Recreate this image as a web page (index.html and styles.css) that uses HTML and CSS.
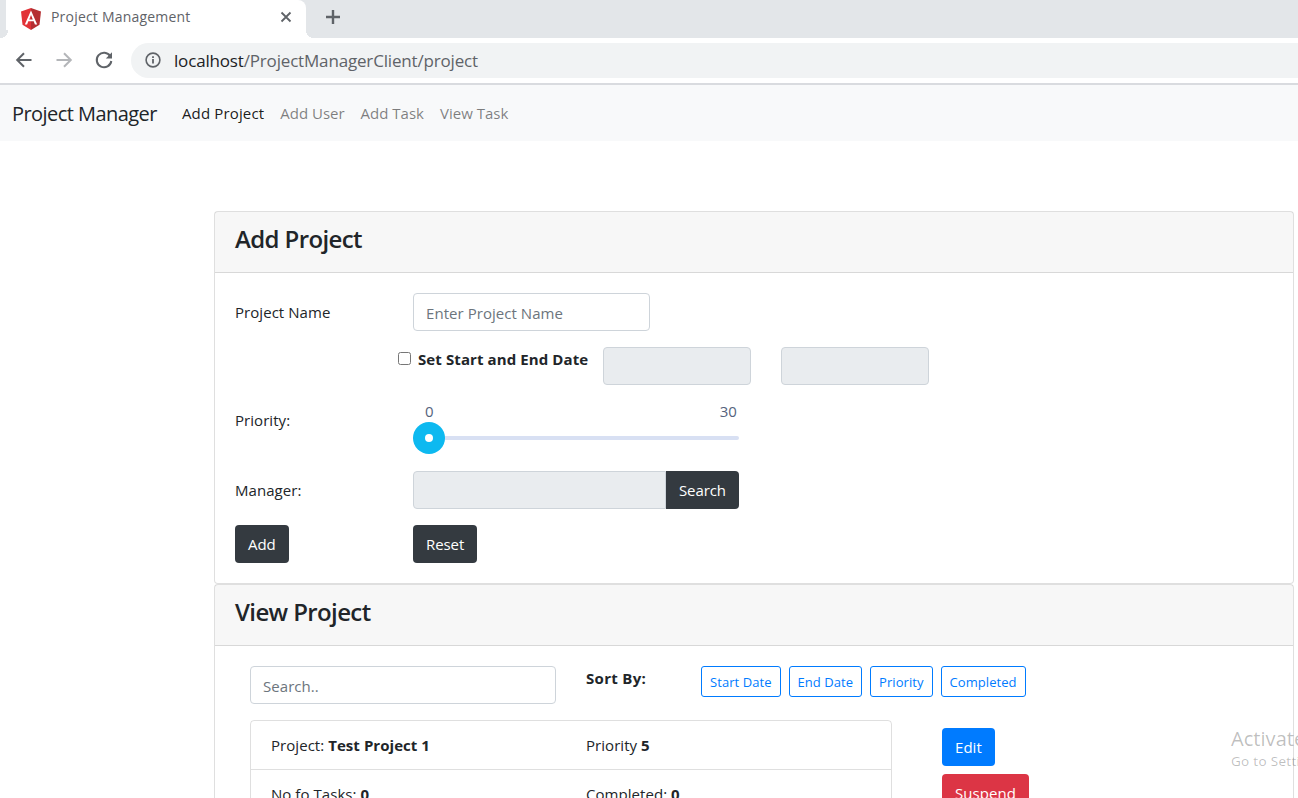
FILE: index.html
```html
<!DOCTYPE html>
<html lang="en">
<head>
  <meta charset="UTF-8">
  <title>Project Management</title>
  <link rel="stylesheet" href="styles.css">
</head>
<body>
  <!-- Browser chrome -->
  <div class="tabstrip">
    <div class="tab">
      <svg class="favicon" width="20" height="22" viewBox="0 0 20 22">
        <path fill="#e23237" d="M10 0 0 3.6l1.5 13.2L10 22z"/>
        <path fill="#b52e31" d="m10 0 10 3.6-1.5 13.2L10 22z"/>
        <path fill="#fff" d="M10 2.5 3.8 16.4h2.3l1.2-3.1h5.4l1.2 3.1h2.3zm1.8 9H8.2L10 7.1z"/>
      </svg>
      <span class="tab-title">Project Management</span>
      <svg class="tab-close" width="12" height="12" viewBox="0 0 12 12">
        <path d="M1.5 1.5l9 9M10.5 1.5l-9 9" stroke="#5f6368" stroke-width="1.8" fill="none"/>
      </svg>
    </div>
    <svg class="new-tab" width="16" height="16" viewBox="0 0 16 16">
      <path d="M8 1v14M1 8h14" stroke="#5f6368" stroke-width="2.4" fill="none"/>
    </svg>
  </div>
  <div class="toolbar">
    <svg class="tool-icon" width="20" height="20" viewBox="0 0 20 20">
      <path d="M17.5 10H3.5M10 3.2 3.2 10l6.8 6.8" stroke="#5f6368" stroke-width="2" fill="none"/>
    </svg>
    <svg class="tool-icon" width="20" height="20" viewBox="0 0 20 20">
      <path d="M2.5 10h14M10 3.2l6.8 6.8-6.8 6.8" stroke="#b4b6b9" stroke-width="2" fill="none"/>
    </svg>
    <svg class="tool-icon" width="20" height="20" viewBox="0 0 20 20">
      <path d="M16.3 6.2A7.3 7.3 0 1 0 17.3 11" stroke="#5f6368" stroke-width="2" fill="none"/>
      <path d="M18 2.2v6.2h-6.2z" fill="#5f6368"/>
    </svg>
    <div class="omnibox">
      <svg width="16" height="16" viewBox="0 0 16 16">
        <circle cx="8" cy="8" r="6.9" stroke="#5f6368" stroke-width="1.6" fill="none"/>
        <path d="M7.1 7h1.8v4.6H7.1zM7.1 4.2h1.8V6H7.1z" fill="#5f6368"/>
      </svg>
      <span class="url"><span class="url-host">localhost</span>/ProjectManagerClient/project</span>
    </div>
  </div>

  <nav class="navbar">
    <a class="brand">Project Manager</a>
    <a class="nav-link active">Add Project</a>
    <a class="nav-link">Add User</a>
    <a class="nav-link">Add Task</a>
    <a class="nav-link">View Task</a>
  </nav>

  <main class="content">
    <section class="card">
      <h4 class="card-header">Add Project</h4>
      <form class="card-body">
        <div class="row">
          <label class="row-label">Project Name</label>
          <input class="field name-field" type="text" placeholder="Enter Project Name">
        </div>
        <div class="row date-row">
          <label class="date-check"><input type="checkbox">Set Start and End Date</label>
          <input class="field date-field" type="text" disabled>
          <input class="field date-field" type="text" disabled>
        </div>
        <div class="row priority-row">
          <label class="row-label priority-label">Priority:</label>
          <div class="slider">
            <div class="slider-labels"><span>0</span><span>30</span></div>
            <div class="slider-track"><span class="slider-thumb"></span></div>
          </div>
        </div>
        <div class="row">
          <label class="row-label">Manager:</label>
          <div class="input-group">
            <input class="field" type="text" disabled>
            <button class="btn btn-dark" type="button">Search</button>
          </div>
        </div>
        <div class="row last-row">
          <div class="row-label"><button class="btn btn-dark" type="button">Add</button></div>
          <button class="btn btn-dark" type="button">Reset</button>
        </div>
      </form>
    </section>

    <section class="card">
      <h4 class="card-header">View Project</h4>
      <div class="card-body view-body">
        <div class="view-tools">
          <input class="field search-field" type="text" placeholder="Search..">
          <b class="sort-label">Sort By:</b>
          <div class="sort-buttons">
            <button class="btn-sm">Start Date</button>
            <button class="btn-sm">End Date</button>
            <button class="btn-sm">Priority</button>
            <button class="btn-sm">Completed</button>
          </div>
        </div>
        <div class="project">
          <div class="list">
            <div class="list-item">
              <span class="list-cell">Project: <b>Test Project 1</b></span>
              <span>Priority <b>5</b></span>
            </div>
            <div class="list-item">
              <span class="list-cell">No fo Tasks: <b>0</b></span>
              <span>Completed: <b>0</b></span>
            </div>
          </div>
          <div class="project-actions">
            <button class="btn btn-primary">Edit</button>
            <button class="btn btn-danger">Suspend</button>
          </div>
        </div>
      </div>
    </section>
  </main>

  <div class="activate">
    <div class="activate-title">Activate Windows</div>
    <div class="activate-sub">Go to Settings to activate Windows.</div>
  </div>
</body>
</html>
```

FILE: styles.css
```css
* {
  box-sizing: border-box;
}

html, body {
  height: 798px;
  overflow: hidden;
}

body {
  margin: 0;
  background: #fff;
  color: #212529;
  font-family: "Open Sans", "Noto Sans", sans-serif;
  font-size: 15px;
  letter-spacing: 0.05px;
  position: relative;
}

/* browser chrome */
.tabstrip {
  height: 38px;
  background: #e3e6e9;
  display: flex;
  align-items: flex-start;
  padding: 0 0 0 6px;
}

.tab {
  width: 300px;
  height: 38px;
  background: #fff;
  border-top-right-radius: 8px;
  display: flex;
  align-items: center;
  padding: 0 15px 0 15px;
  position: relative;
}

.tab::before,
.tab::after {
  content: "";
  position: absolute;
  bottom: 0;
  width: 8px;
  height: 8px;
}

.tab::before {
  left: -6px;
  background: radial-gradient(circle at 0 0, #e3e6e9 8px, #fff 8px);
}

.tab::after {
  right: -8px;
  background: radial-gradient(circle at 100% 0, #e3e6e9 8px, #fff 8px);
}

.tab-title {
  margin: 0 0 5px 10px;
  flex: 1;
  font-size: 14px;
  letter-spacing: 0.2px;
  color: #5f6368;
}

.tab-close {
  margin: 0 -1px 4px 0;
}

.new-tab {
  margin: 9px 0 0 19px;
}

.toolbar {
  height: 47px;
  border-bottom: 2px solid #d9dbdf;
  display: flex;
  align-items: center;
  padding: 0 0 1px 14px;
}

.tool-icon {
  margin-right: 20px;
}

.omnibox {
  flex: 1;
  height: 35px;
  background: #f1f3f4;
  border-radius: 18px 0 0 18px;
  margin-left: -3px;
  display: flex;
  align-items: center;
  padding-left: 14px;
}

.url {
  margin-left: 13px;
  font-size: 17px;
  letter-spacing: -0.17px;
  color: #5f6368;
}

.url-host {
  color: #202124;
}

/* navbar */
.navbar {
  height: 56px;
  background: #f8f9fa;
  display: flex;
  align-items: center;
  padding: 0 16px 0 12px;
}

.brand {
  font-size: 20px;
  letter-spacing: -0.55px;
  margin-right: 25px;
}

.nav-link {
  margin-right: 16px;
  letter-spacing: 0;
  color: rgba(0, 0, 0, 0.5);
}

.nav-link.active {
  letter-spacing: 0.15px;
  color: rgba(0, 0, 0, 0.9);
}

/* cards */
.content {
  margin: 70px 4px 0 214px;
}

.card {
  border: 1px solid rgba(0, 0, 0, 0.125);
  border-radius: 4px;
  background: #fff;
}

.card-header {
  margin: 0;
  height: 61px;
  padding: 0 20px;
  background: rgba(0, 0, 0, 0.03);
  border-bottom: 1px solid rgba(0, 0, 0, 0.125);
  font-size: 24px;
  font-weight: 600;
  letter-spacing: -0.62px;
  line-height: 54px;
}

.card-body {
  padding: 20px;
}

.row {
  display: flex;
  align-items: center;
  margin-bottom: 16px;
}

.last-row {
  margin-bottom: 0;
}

.row-label {
  width: 178px;
  flex: none;
}

.priority-label {
  align-self: flex-start;
  margin-top: 9px;
}

.field {
  height: 38px;
  padding: 7px 12px 5px;
  border: 1px solid #ced4da;
  border-radius: 4px;
  background: #fff;
  font: inherit;
  letter-spacing: inherit;
  color: #495057;
}

.field::placeholder {
  color: #6c757d;
  opacity: 1;
}

.field:disabled {
  background: #e9ecef;
}

.name-field {
  width: 237px;
}

.date-row {
  align-items: flex-start;
  padding-left: 162px;
}

.date-check {
  width: 185px;
  margin: 2px 0 0 21px;
  position: relative;
  font-weight: 700;
  letter-spacing: 0.1px;
}

.date-check input {
  position: absolute;
  left: -20px;
  top: 3px;
  margin: 0;
  width: 13px;
  height: 13px;
}

.date-field {
  width: 148px;
  margin-right: 30px;
}

.priority-row {
  height: 54px;
}

.slider {
  width: 326px;
  align-self: flex-start;
}

.slider-labels {
  display: flex;
  justify-content: space-between;
  padding: 0 0 0 12px;
  height: 22px;
  color: #55637d;
}

.slider-labels span:last-child {
  margin-right: 2px;
}

.slider-track {
  position: relative;
  height: 4px;
  margin-top: 13px;
  background: #d8e0f3;
  border-radius: 2px;
}

.slider-thumb {
  position: absolute;
  left: 0;
  top: -14px;
  width: 32px;
  height: 32px;
  border-radius: 50%;
  background: #0db9f0;
}

.slider-thumb::after {
  content: "";
  position: absolute;
  left: 12px;
  top: 12px;
  width: 8px;
  height: 8px;
  border-radius: 50%;
  background: #fff;
}

.input-group {
  width: 326px;
  display: flex;
}

.input-group .field {
  flex: 1;
  min-width: 0;
  border-radius: 4px 0 0 4px;
}

.input-group .btn {
  border-radius: 0 4px 4px 0;
}

.btn {
  height: 38px;
  padding: 6px 12px;
  border: 1px solid transparent;
  border-radius: 4px;
  font: inherit;
  letter-spacing: inherit;
  color: #fff;
}

.btn-dark {
  background: #343a40;
  letter-spacing: -0.08px;
}

.btn-primary {
  background: #007bff;
  align-self: flex-start;
}

.btn-danger {
  background: #dc3545;
}

/* view project */
.view-body {
  padding-left: 35px;
}

.view-tools {
  display: flex;
  align-items: flex-start;
}

.search-field {
  width: 306px;
}

.sort-label {
  margin: 2px 0 0 30px;
  width: 115px;
  letter-spacing: 0.3px;
}

.sort-buttons {
  display: flex;
  gap: 8px;
}

.btn-sm {
  height: 31px;
  padding: 0 8px;
  border: 1px solid #007bff;
  border-radius: 3px;
  background: #fff;
  font: inherit;
  font-size: 13px;
  letter-spacing: 0.06px;
  color: #007bff;
}

.project {
  display: flex;
  margin-top: 16px;
}

.list {
  width: 642px;
  border: 1px solid rgba(0, 0, 0, 0.125);
  border-radius: 4px;
}

.list-item {
  display: flex;
  height: 49px;
  align-items: center;
  padding: 0 20px 1px;
  border-bottom: 1px solid rgba(0, 0, 0, 0.125);
}

.list-item:last-child {
  border-bottom: 0;
}

.list-cell {
  width: 315px;
}

.project-actions {
  display: flex;
  flex-direction: column;
  gap: 8px;
  margin: 8px 0 0 50px;
}

/* watermark */
.activate {
  position: absolute;
  left: 1231px;
  top: 725px;
  width: 320px;
  color: rgba(0, 0, 0, 0.26);
  pointer-events: none;
}

.activate-title {
  font-size: 20px;
}

.activate-sub {
  font-size: 13.5px;
  letter-spacing: 0.3px;
}
```
